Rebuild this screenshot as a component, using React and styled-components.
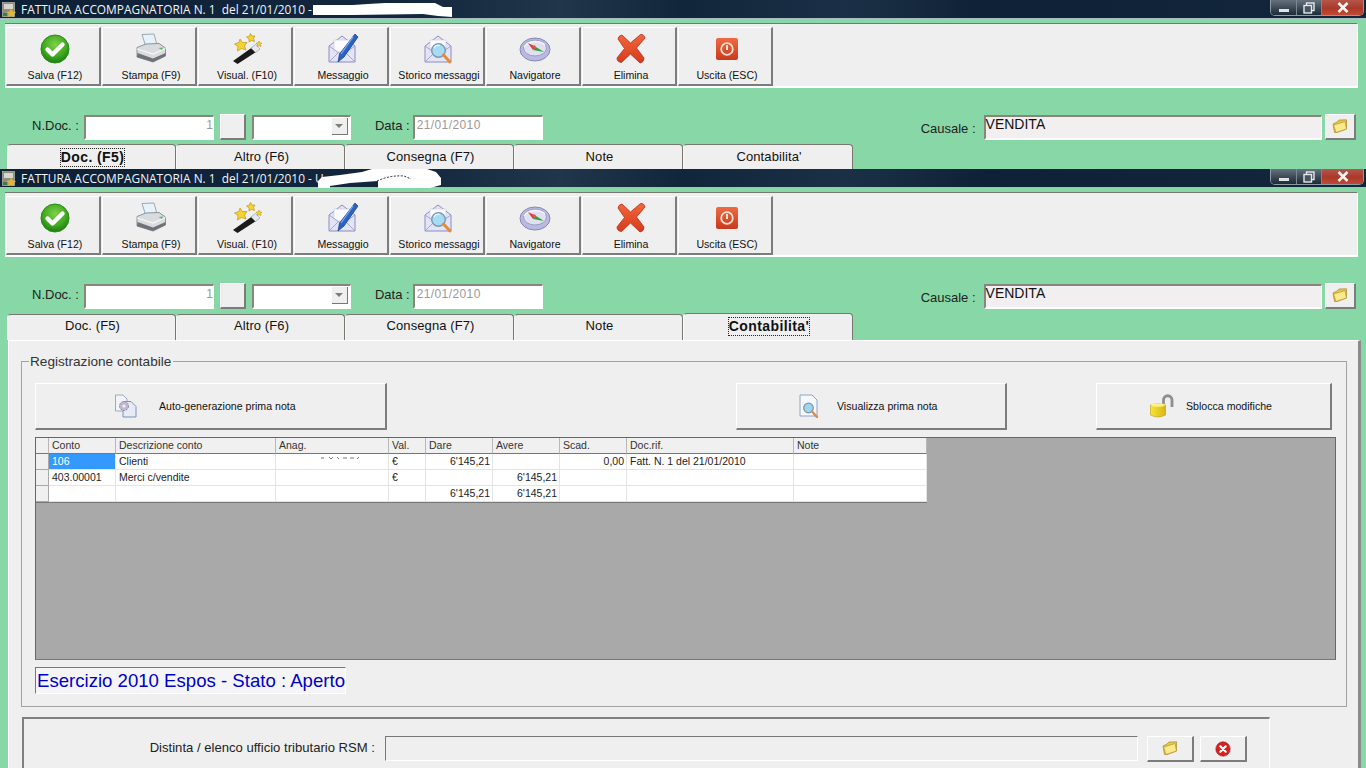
import React from "react";
import styled, { createGlobalStyle } from "styled-components";

const GlobalStyle = createGlobalStyle`
  html, body {
    margin: 0;
    padding: 0;
    background: #87d7a7;
    overflow: hidden;
  }
  * {
    box-sizing: border-box;
  }
`;

const Page = styled.div`
  width: 1366px;
  height: 768px;
  overflow: hidden;
  display: flex;
  flex-direction: column;
  background: #87d7a7;
  font-family: "Liberation Sans", Arial, sans-serif;
  color: #111;
`;

const Window = styled.section`
  height: ${(p) => p.$height}px;
  flex: none;
  overflow: hidden;
`;

const TitleBar = styled.header`
  position: relative;
  height: 19px;
  display: flex;
  align-items: flex-start;
  padding: 2px 0 0 2px;
  background: linear-gradient(90deg, #0e2036 0%, #12263d 30%, #22364b 41%, #11253b 50%, #1b3046 62%, #0f2137 72%, #12263c 100%);
  border-bottom: 1px solid #a9bcc0;
`;

const TitleText = styled.span`
  margin-left: 5px;
  font-family: "Open Sans", sans-serif;
  font-size: 11.9px;
  line-height: 15px;
  color: #f2f5f7;
  white-space: pre;
`;

const Scribble = styled.svg`
  position: absolute;
  left: ${(p) => p.$left}px;
  top: 0;
`;

const WindowControls = styled.div`
  position: absolute;
  top: 0;
  right: 2px;
  width: 94px;
  height: 16px;
  display: grid;
  grid-template-columns: 26px 25px 43px;
  border: 1px solid #8d99a3;
  border-top: none;
  border-radius: 0 0 5px 5px;
  overflow: hidden;
`;

const WindowButton = styled.div`
  display: flex;
  align-items: center;
  justify-content: center;
  border-right: 1px solid #7b8791;
  background: ${(p) =>
    p.$close
      ? "linear-gradient(#b5564a, #a83a2a 55%, #c5482f)"
      : "linear-gradient(#66727d, #3c4854 55%, #1c2b3a)"};
`;

const Toolbar = styled.nav`
  height: 65px;
  margin: 4px 8px 0 5px;
  padding: 3px 0 0 1px;
  display: flex;
  gap: 1px;
  background: #efefef;
  border-top: 1px solid #77766f;
  border-right: 1px solid #fff;
  border-bottom: 2px solid #fff;
`;

const ToolButton = styled.button`
  width: 95px;
  height: 59px;
  padding: 5px 0 0 4px;
  display: flex;
  flex-direction: column;
  align-items: center;
  background: #efefef;
  border: none;
  border-top: 1px solid #fff;
  border-left: 1px solid #fff;
  border-right: 2px solid #7c7c7c;
  border-bottom: 2px solid #7c7c7c;
  font-family: inherit;
  font-size: 10.6px;
  color: #111;
`;

const ToolIcon = styled.span`
  height: 32px;
  display: flex;
  align-items: center;
  justify-content: center;
`;

const ToolLabel = styled.span`
  margin-top: 4px;
  line-height: 13px;
  white-space: nowrap;
`;

const DocRow = styled.div`
  height: 26px;
  margin-top: 26px;
  padding: 0 10px 0 32px;
  display: flex;
  align-items: center;
`;

const RowLabel = styled.label`
  margin-left: ${(p) => p.$offset || 0}px;
  margin-top: ${(p) => p.$drop || 0}px;
  font-size: 13px;
  white-space: nowrap;
  color: #222;
`;

const SunkenField = styled.div`
  width: ${(p) => p.$width}px;
  height: 25px;
  margin-left: ${(p) => p.$offset || 0}px;
  padding: 0 ${(p) => (p.$right || p.$filled ? 0 : 2)}px ${(p) => (p.$top ? 0 : 4)}px ${(p) => (p.$filled ? 0 : 2)}px;
  display: flex;
  align-items: ${(p) => (p.$top ? "flex-start" : "center")};
  justify-content: ${(p) => (p.$right ? "flex-end" : "flex-start")};
  flex: none;
  background: ${(p) => (p.$filled ? "#f1efef" : "#fff")};
  border-top: 2px solid #8a857b;
  border-left: 2px solid #8a857b;
  border-right: 1px solid #fff;
  border-bottom: 2px solid #fff;
  font-size: 12px;
  color: ${(p) => (p.$dark ? "#111" : "#9a9a9a")};
`;

const FieldValue = styled.span`
  font-size: ${(p) => p.$size || 12}px;
  line-height: 15px;
  letter-spacing: ${(p) => p.$spacing || 0}px;
`;

const SmallButton = styled.button`
  width: ${(p) => p.$width}px;
  height: 26px;
  margin-left: ${(p) => p.$offset || 0}px;
  padding: 0;
  display: flex;
  align-items: center;
  justify-content: center;
  flex: none;
  background: #efefef;
  border: none;
  border-top: 1px solid #fff;
  border-left: 1px solid #fff;
  border-right: 2px solid #7c7c7c;
  border-bottom: 2px solid #7c7c7c;
`;

const ComboArrow = styled.span`
  width: 16px;
  height: 17px;
  margin-left: auto;
  margin-bottom: -3px;
  display: flex;
  align-items: center;
  justify-content: center;
  background: #efefef;
  border-right: 1px solid #777;
  border-bottom: 1px solid #777;
`;

const ComboTriangle = styled.span`
  width: 0;
  height: 0;
  border-left: 4px solid transparent;
  border-right: 4px solid transparent;
  border-top: 4px solid #7d7d7d;
`;

const TabStrip = styled.div`
  height: ${(p) => p.$height}px;
  margin-top: 4px;
  padding-left: 7px;
  display: flex;
  align-items: flex-end;
`;

const Tab = styled.div`
  width: ${(p) => p.$width || 169}px;
  height: ${(p) => (p.$active ? p.$height : p.$height - (p.$lift || 0))}px;
  padding: ${(p) => (p.$active ? 4 : 4 - (p.$lift || 0))}px 0 0 2px;
  display: flex;
  justify-content: center;
  align-items: flex-start;
  background: #efefef;
  border-top: 1px solid #77766f;
  border-right: 1px solid #77766f;
  border-left: 1px solid ${(p) => (p.$active ? "#fff" : "#f8f8f8")};
  border-radius: 4px 4px 0 0;
  font-size: 13px;
  letter-spacing: 0.1px;
`;

const TabText = styled.span`
  line-height: ${(p) => (p.$active ? 17 : 15)}px;
  font-size: ${(p) => (p.$active ? 14 : 13)}px;
  font-weight: ${(p) => (p.$active ? 700 : 400)};
  letter-spacing: ${(p) => (p.$active ? 0.4 : 0.1)}px;
  outline: ${(p) => (p.$active ? "1px dotted #222" : "none")};
  white-space: nowrap;
`;

const Panel = styled.main`
  height: 428px;
  margin-left: 8px;
  width: 1353px;
  padding: 20px 0 0 12px;
  background: #efefef;
  border-top: 1px solid #fff;
  border-left: 1px solid #fff;
  border-right: 3px solid #8b8b8b;
`;

const GroupBox = styled.fieldset`
  position: relative;
  width: 1326px;
  height: 346px;
  margin: 0;
  padding: 21px 10px 0 13px;
  border: 1px solid #a3a3a3;
`;

const GroupTitle = styled.span`
  position: absolute;
  left: 7px;
  top: -8px;
  padding: 0 2px 0 1px;
  background: #efefef;
  font-size: 13.6px;
  line-height: 15px;
  color: #333;
`;

const ActionRow = styled.div`
  height: 47px;
  display: flex;
`;

const ActionButton = styled.button`
  width: ${(p) => p.$width}px;
  height: 47px;
  margin-left: ${(p) => p.$offset || 0}px;
  padding: 0 0 0 ${(p) => p.$inset}px;
  display: flex;
  align-items: center;
  flex: none;
  background: #efefef;
  border: none;
  border-top: 1px solid #fff;
  border-left: 1px solid #fff;
  border-right: 2px solid #7c7c7c;
  border-bottom: 2px solid #7c7c7c;
  font-family: inherit;
  font-size: 10.6px;
  color: #111;
`;

const ActionLabel = styled.span`
  margin-left: ${(p) => p.$gap}px;
  white-space: nowrap;
`;

const GridArea = styled.div`
  height: 223px;
  margin-top: 7px;
  background: #a9a9a9;
  border: 1px solid #666;
  border-bottom-color: #777;
`;

const Sheet = styled.div`
  width: 891px;
  display: grid;
  grid-template-columns: 13px 67px 160px 113px 37px 67px 67px 67px 167px 133px;
  grid-auto-rows: 16px;
  border-right: 1px solid #777;
  border-bottom: 1px solid #777;
  font-size: 10.5px;
`;

const HeadCell = styled.div`
  height: 16px;
  padding-left: 3px;
  background: #f0f0f0;
  border-right: 1px solid #b8b8b8;
  border-bottom: 1px solid #777;
  line-height: 15px;
  color: #333;
  white-space: nowrap;
`;

const RowHead = styled.div`
  background: #f0f0f0;
  border-right: 1px solid #a8a8a8;
  border-bottom: 1px solid #a8a8a8;
`;

const Cell = styled.div`
  padding: 0 2px 0 3px;
  background: ${(p) => (p.$selected ? "#3399ff" : "#fff")};
  border-right: 1px solid #e4e4e4;
  border-bottom: 1px solid #e4e4e4;
  text-align: ${(p) => (p.$right ? "right" : "left")};
  line-height: 15px;
  color: ${(p) => (p.$selected ? "#fff" : "#222")};
  white-space: nowrap;
  overflow: hidden;
`;

const StatusBox = styled.div`
  width: 311px;
  height: 27px;
  margin-top: 7px;
  padding-left: 1px;
  background: #f5f5f8;
  border-top: 1px solid #777;
  border-left: 1px solid #777;
  border-right: 1px solid #fff;
  border-bottom: 1px solid #fff;
  font-size: 18.6px;
  line-height: 26px;
  color: #0000c4;
  white-space: nowrap;
`;

const LowerPanel = styled.div`
  width: 1248px;
  height: 60px;
  margin: 10px 0 0 1px;
  padding: 17px 0 0 0;
  display: flex;
  align-items: flex-start;
  border-top: 2px solid #808080;
  border-left: 2px solid #808080;
  border-right: 1px solid #fff;
`;

const LowerLabel = styled.label`
  width: 351px;
  margin-top: 4px;
  text-align: right;
  font-size: 13.1px;
  line-height: 15px;
  color: #222;
  white-space: nowrap;
`;

const LowerField = styled.div`
  width: 753px;
  height: 25px;
  margin-left: 10px;
  background: #efefef;
  border-top: 1px solid #777;
  border-left: 1px solid #777;
  border-right: 1px solid #fff;
  border-bottom: 1px solid #fff;
`;

const CheckIcon = () => (
  <svg width="32" height="32" viewBox="0 0 32 32">
    <defs>
      <radialGradient id="okFill" cx="50%" cy="35%" r="65%">
        <stop offset="0" stopColor="#7fd14a" />
        <stop offset="0.65" stopColor="#3ea81e" />
        <stop offset="1" stopColor="#1c7d10" />
      </radialGradient>
    </defs>
    <circle cx="16" cy="16" r="14" fill="url(#okFill)" stroke="#2a8a1a" />
    <path d="M8.5 16.5 L13.5 21.5 L23.5 11.5" fill="none" stroke="#fff" strokeWidth="4.4" strokeLinecap="round" strokeLinejoin="round" />
  </svg>
);

const PrinterIcon = () => (
  <svg width="32" height="32" viewBox="0 0 32 32">
    <path d="M7 1.5 L19 1 L22 12 L11 14 Z" fill="#e8f2fa" stroke="#9aa9b5" />
    <path d="M2 14.5 L11 11 L24 10.5 L30.5 15 L30.5 23 L18 29 L2 24 Z" fill="#d9dcdf" stroke="#8e9297" />
    <path d="M2 16 L18 21 L30.5 15.5" fill="none" stroke="#f7f7f7" strokeWidth="1.2" />
    <path d="M2.5 20 L18 25.5 L30.5 20 L30.5 23 L18 29 L2 24 Z" fill="#6e7277" />
    <path d="M23.5 15 L28 14.5 L27 17 Z" fill="#5cb85c" />
  </svg>
);

const WandIcon = () => (
  <svg width="32" height="32" viewBox="0 0 32 32">
    <path d="M2 28 L21 14.5 L25 19 L6.5 31 Z" fill="#1a1a1a" />
    <path d="M20 15 L24.5 11.5 L29 16 L24.5 19.5 Z" fill="#e4e8ec" stroke="#8c96a0" strokeWidth="0.6" />
    <path d="M9 6 L11.5 9.5 L16 9.5 L13.5 13 L15 17 L10.5 15.5 L6.5 18 L7 13.5 L3.5 11 L8 9.5 Z" fill="#f6d22e" stroke="#b08a10" strokeWidth="0.6" />
    <path d="M19.5 0.5 L21 3 L24 3 L22.5 5.5 L23.5 8.5 L20.5 7.5 L18 9 L18 6 L15.5 4 L18.5 3 Z" fill="#f6d22e" stroke="#b08a10" strokeWidth="0.6" />
    <path d="M28 8 L29 10 L31 10.2 L29.5 11.6 L30 13.6 L28 12.6 L26.2 13.6 L26.6 11.6 L25 10.2 L27 10 Z" fill="#f6d22e" stroke="#b08a10" strokeWidth="0.5" />
  </svg>
);

const EnvelopeBase = () => (
  <>
    <path d="M2 13 L15 3 L28 13 L28 29 L2 29 Z" fill="#e3e4f6" stroke="#8c8cc0" />
    <path d="M7 7 L23 7 L23 19 L7 19 Z" fill="#fbfbff" stroke="#c8c8e0" strokeWidth="0.6" />
    <path d="M2 13 L15 22 L28 13" fill="none" stroke="#a5a5d0" />
    <path d="M2 29 L12 19 M28 29 L18 19" stroke="#a5a5d0" fill="none" />
  </>
);

const PenEnvelopeIcon = () => (
  <svg width="32" height="32" viewBox="0 0 32 32">
    <EnvelopeBase />
    <path d="M28 1 L31 4 L17 24 L11 29 L12.5 21 Z" fill="#2b62c4" stroke="#163a80" strokeWidth="0.7" />
    <path d="M26 4 L14 21" stroke="#7fb0f0" strokeWidth="1.2" />
  </svg>
);

const SearchEnvelopeIcon = () => (
  <svg width="32" height="32" viewBox="0 0 32 32">
    <EnvelopeBase />
    <circle cx="15.5" cy="17.5" r="6.8" fill="#a6dcf2" stroke="#7a98b0" strokeWidth="1.4" />
    <path d="M11 15 A5 5 0 0 1 17 12.5" fill="none" stroke="#e6f7ff" strokeWidth="1.2" />
    <path d="M20.5 22 L27 29" stroke="#e78a36" strokeWidth="3" strokeLinecap="round" />
  </svg>
);

const CompassIcon = () => (
  <svg width="32" height="32" viewBox="0 0 32 32">
    <ellipse cx="16" cy="16.5" rx="15" ry="11.5" fill="#b9b9e2" stroke="#8888b5" />
    <ellipse cx="16" cy="15" rx="11.5" ry="8" fill="#dfe2ee" stroke="#9c9cc4" />
    <path d="M5 14 A12 8 0 0 1 26 12" fill="none" stroke="#f7f7ff" strokeWidth="1.2" />
    <path d="M9 10 L17 14 L14 17 Z" fill="#d93636" />
    <path d="M17 14 L25 19 L14 17 Z" fill="#3a9a3c" />
    <circle cx="15" cy="14" r="1.8" fill="#e05050" />
  </svg>
);

const CrossIcon = () => (
  <svg width="32" height="32" viewBox="0 0 32 32">
    <defs>
      <linearGradient id="crossFill" x1="0" y1="0" x2="0" y2="1">
        <stop offset="0" stopColor="#f2663c" />
        <stop offset="1" stopColor="#d63a1c" />
      </linearGradient>
    </defs>
    <path d="M7 2 L15.5 10 L25.5 1.5 Q29 1 30 5 L21.5 15 L29 25 Q29 29.5 25 30 L15.5 21 L6.5 29.5 Q2 29 2 25 L9.5 15.5 L3 6 Q3.5 2.5 7 2 Z" fill="url(#crossFill)" stroke="#b3301a" strokeWidth="0.8" />
  </svg>
);

const PowerIcon = () => (
  <svg width="32" height="32" viewBox="0 0 32 32">
    <defs>
      <linearGradient id="powerFill" x1="0" y1="0" x2="0" y2="1">
        <stop offset="0" stopColor="#ee6a44" />
        <stop offset="1" stopColor="#c93a1c" />
      </linearGradient>
    </defs>
    <rect x="5" y="5" width="22" height="22" rx="2" fill="url(#powerFill)" />
    <circle cx="16" cy="16" r="5.8" fill="none" stroke="#fbe2d2" strokeWidth="1.8" />
    <path d="M16 12 V17" stroke="#fbe2d2" strokeWidth="2" />
  </svg>
);

const FolderIcon = () => (
  <svg width="16" height="15" viewBox="0 0 16 15">
    <path d="M1 5 L5 3 L7 1 L14.5 0.8 L14.5 10 L5 13.5 L2.5 13.5 Z" fill="#e5c84a" stroke="#a98a2a" strokeWidth="0.7" />
    <path d="M1.5 6 L10 3.5 L13 2.5 L14.5 10 L4 13.5 Z" fill="#fbe98a" stroke="#b39530" strokeWidth="0.7" />
  </svg>
);

const StopIcon = () => (
  <svg width="16" height="16" viewBox="0 0 16 16">
    <circle cx="8" cy="8" r="7.2" fill="#d92020" stroke="#a81818" strokeWidth="0.6" />
    <path d="M5.3 5.3 L10.7 10.7 M10.7 5.3 L5.3 10.7" stroke="#fff" strokeWidth="2.2" strokeLinecap="round" />
  </svg>
);

const GearDocIcon = () => (
  <svg width="24" height="24" viewBox="0 0 24 24">
    <path d="M1.5 1 L9 1 L13 5 L13 17 L1.5 17 Z" fill="#f2f4fa" stroke="#9aa8c4" />
    <path d="M9 7.5 L17 7.5 L22 12.5 L22 23 L9 23 Z" fill="#e6ebf6" stroke="#7f90b8" />
    <circle cx="10" cy="12" r="4.5" fill="#bfb9d0" stroke="#8f89a8" strokeDasharray="2 1" />
    <circle cx="10" cy="12" r="1.6" fill="#efeff5" />
  </svg>
);

const SearchDocIcon = () => (
  <svg width="24" height="24" viewBox="0 0 24 24">
    <path d="M2 1 L14 1 L19 6 L19 22 L2 22 Z" fill="#f5f8fd" stroke="#8ea4c4" />
    <circle cx="10.5" cy="14" r="4.8" fill="#9ed6f0" stroke="#7c92a8" strokeWidth="1.2" />
    <path d="M14 17.5 L19 23" stroke="#e08a42" strokeWidth="2.4" strokeLinecap="round" />
  </svg>
);

const PadlockIcon = () => (
  <svg width="24" height="24" viewBox="0 0 24 24">
    <defs>
      <linearGradient id="lockFill" x1="0" y1="0" x2="1" y2="0">
        <stop offset="0" stopColor="#f7e53a" />
        <stop offset="1" stopColor="#d9b416" />
      </linearGradient>
    </defs>
    <path d="M13.5 11 V6 A4.2 4.2 0 0 1 22 6 V13" fill="none" stroke="#8e8e8e" strokeWidth="2.8" />
    <path d="M0.5 11 Q8 8 15.5 11 L15.5 21 Q8 25 0.5 21 Z" fill="url(#lockFill)" stroke="#b89a12" strokeWidth="0.6" />
    <ellipse cx="8" cy="11" rx="7" ry="1.8" fill="#fbf08a" />
  </svg>
);

const AppIcon = () => (
  <svg width="14" height="15" viewBox="0 0 14 15">
    <rect x="0.5" y="0.5" width="12" height="14" fill="#8f8d7c" stroke="#c9c9b8" strokeWidth="0.6" />
    <rect x="2" y="2" width="9" height="5" fill="#d8d6cc" />
    <path d="M9 7 L11 9.5 L14 10 L12 12 L12.5 15 L9 14 L6 15 L6.5 12 L4.5 10 L7.5 9.5 Z" fill="#e0b63a" />
    <rect x="1" y="11" width="4" height="3" fill="#3f7a4a" />
  </svg>
);

const FirstScribble = () => (
  <Scribble $left={313} width="140" height="18" viewBox="0 0 140 18">
    <path d="M0 5 L40 5 L55 4 L72 3 L122 3 L130 7 L139 7 L139 17 L125 16 L110 14 L40 15 L0 15 Z" fill="#fff" />
  </Scribble>
);

const SecondScribble = () => (
  <Scribble $left={318} width="124" height="20" viewBox="0 0 124 20">
    <path d="M0 12 L4 8 L22 6 L44 3 L54 0 L109 0 L118 3 L123 9 L123 16 L112 19 L60 19 L60 12 L32 14 L12 17 L12 19 L0 19 Z" fill="#fff" />
    <path d="M59 12 Q72 6 86 7 L93 10" fill="none" stroke="#1c2b3a" strokeWidth="1" strokeDasharray="2 1.5" />
  </Scribble>
);

const AnagTraces = styled.svg`
  display: block;
  margin: 2px 0 0 42px;
`;

const tools = [
  { label: "Salva (F12)", Icon: CheckIcon },
  { label: "Stampa (F9)", Icon: PrinterIcon },
  { label: "Visual. (F10)", Icon: WandIcon },
  { label: "Messaggio", Icon: PenEnvelopeIcon },
  { label: "Storico messaggi", Icon: SearchEnvelopeIcon },
  { label: "Navigatore", Icon: CompassIcon },
  { label: "Elimina", Icon: CrossIcon },
  { label: "Uscita (ESC)", Icon: PowerIcon },
];

const tabs = ["Doc. (F5)", "Altro (F6)", "Consegna (F7)", "Note", "Contabilita'"];

const WindowHeader = ({ activeTab, scribble, suffix, stripHeight, lift }) => (
  <>
    <TitleBar>
      <AppIcon />
      <TitleText>{"FATTURA ACCOMPAGNATORIA N. 1  del 21/01/2010 - " + suffix}</TitleText>
      {scribble}
      <WindowControls>
        <WindowButton>
          <svg width="12" height="12" viewBox="0 0 12 12">
            <rect x="1" y="7" width="10" height="3" fill="#dfe4e8" />
          </svg>
        </WindowButton>
        <WindowButton>
          <svg width="12" height="12" viewBox="0 0 12 12">
            <rect x="3.5" y="1" width="7.5" height="7.5" fill="none" stroke="#e4e8ec" strokeWidth="1.4" />
            <rect x="1" y="3.5" width="7.5" height="7.5" fill="#49545f" stroke="#e4e8ec" strokeWidth="1.4" />
          </svg>
        </WindowButton>
        <WindowButton $close>
          <svg width="14" height="11" viewBox="0 0 14 11">
            <path d="M2.5 1 L11.5 10 M11.5 1 L2.5 10" stroke="#f4f4f4" strokeWidth="2.6" />
          </svg>
        </WindowButton>
      </WindowControls>
    </TitleBar>
    <Toolbar>
      {tools.map(({ label, Icon }) => (
        <ToolButton key={label}>
          <ToolIcon>
            <Icon />
          </ToolIcon>
          <ToolLabel>{label}</ToolLabel>
        </ToolButton>
      ))}
    </Toolbar>
    <DocRow>
      <RowLabel $drop={-4}>N.Doc. :</RowLabel>
      <SunkenField $width={130} $offset={5} $right>
        <FieldValue>1</FieldValue>
      </SunkenField>
      <SmallButton $width={26} $offset={6} />
      <SunkenField $width={99} $offset={6}>
        <ComboArrow>
          <ComboTriangle />
        </ComboArrow>
      </SunkenField>
      <RowLabel $offset={24} $drop={-4}>Data :</RowLabel>
      <SunkenField $width={130} $offset={3}>
        <FieldValue $spacing={0.4}>21/01/2010</FieldValue>
      </SunkenField>
      <RowLabel $offset={378} $drop={2}>Causale :</RowLabel>
      <SunkenField $width={338} $offset={8} $filled $dark $top>
        <FieldValue $size={14}>VENDITA</FieldValue>
      </SunkenField>
      <SmallButton $width={31} $offset={3}>
        <FolderIcon />
      </SmallButton>
    </DocRow>
    <TabStrip $height={stripHeight}>
      {tabs.map((tab, i) => (
        <Tab
          key={tab}
          $active={i === activeTab}
          $height={stripHeight}
          $lift={lift}
          $width={i === 4 ? 170 : 169}
        >
          <TabText $active={i === activeTab}>{tab}</TabText>
        </Tab>
      ))}
    </TabStrip>
  </>
);

const entries = [
  ["106", "Clienti", "", "€", "6'145,21", "", "0,00", "Fatt. N. 1 del 21/01/2010", ""],
  ["403.00001", "Merci c/vendite", "", "€", "", "6'145,21", "", "", ""],
  ["", "", "", "", "6'145,21", "6'145,21", "", "", ""],
];

const columns = ["Conto", "Descrizione conto", "Anag.", "Val.", "Dare", "Avere", "Scad.", "Doc.rif.", "Note"];

const rightAligned = [4, 5, 6];

export default function App() {
  return (
    <Page>
      <GlobalStyle />
      <Window $height={169}>
        <WindowHeader activeTab={0} suffix="" scribble={<FirstScribble />} stripHeight={25} lift={0} />
      </Window>
      <Window $height={599}>
        <WindowHeader activeTab={4} suffix="U" scribble={<SecondScribble />} stripHeight={27} lift={1} />
        <Panel>
          <GroupBox>
            <GroupTitle>Registrazione contabile</GroupTitle>
            <ActionRow>
              <ActionButton $width={352} $inset={78}>
                <GearDocIcon />
                <ActionLabel $gap={21}>Auto-generazione prima nota</ActionLabel>
              </ActionButton>
              <ActionButton $width={271} $offset={349} $inset={61}>
                <SearchDocIcon />
                <ActionLabel $gap={15}>Visualizza prima nota</ActionLabel>
              </ActionButton>
              <ActionButton $width={236} $offset={89} $inset={53}>
                <PadlockIcon />
                <ActionLabel $gap={12}>Sblocca modifiche</ActionLabel>
              </ActionButton>
            </ActionRow>
            <GridArea>
              <Sheet>
                <HeadCell />
                {columns.map((c) => (
                  <HeadCell key={c}>{c}</HeadCell>
                ))}
                {entries.map((row, r) => (
                  <React.Fragment key={r}>
                    <RowHead />
                    {row.map((value, c) => (
                      <Cell key={c} $right={rightAligned.includes(c)} $selected={r === 0 && c === 0}>
                        {r === 0 && c === 2 ? (
                          <AnagTraces width="40" height="4" viewBox="0 0 40 4">
                            <path d="M0 2 H3 M8 1 L10 3 L12 1 M16 1 L18 3 M22 2 H26 M29 2 H33 M36 3 L38 1" stroke="#777" strokeWidth="1" fill="none" />
                          </AnagTraces>
                        ) : (
                          value
                        )}
                      </Cell>
                    ))}
                  </React.Fragment>
                ))}
              </Sheet>
            </GridArea>
            <StatusBox>Esercizio 2010 Espos - Stato : Aperto</StatusBox>
          </GroupBox>
          <LowerPanel>
            <LowerLabel>Distinta / elenco ufficio tributario RSM :</LowerLabel>
            <LowerField />
            <SmallButton $width={47} $offset={9}>
              <FolderIcon />
            </SmallButton>
            <SmallButton $width={47} $offset={6}>
              <StopIcon />
            </SmallButton>
          </LowerPanel>
        </Panel>
      </Window>
    </Page>
  );
}
